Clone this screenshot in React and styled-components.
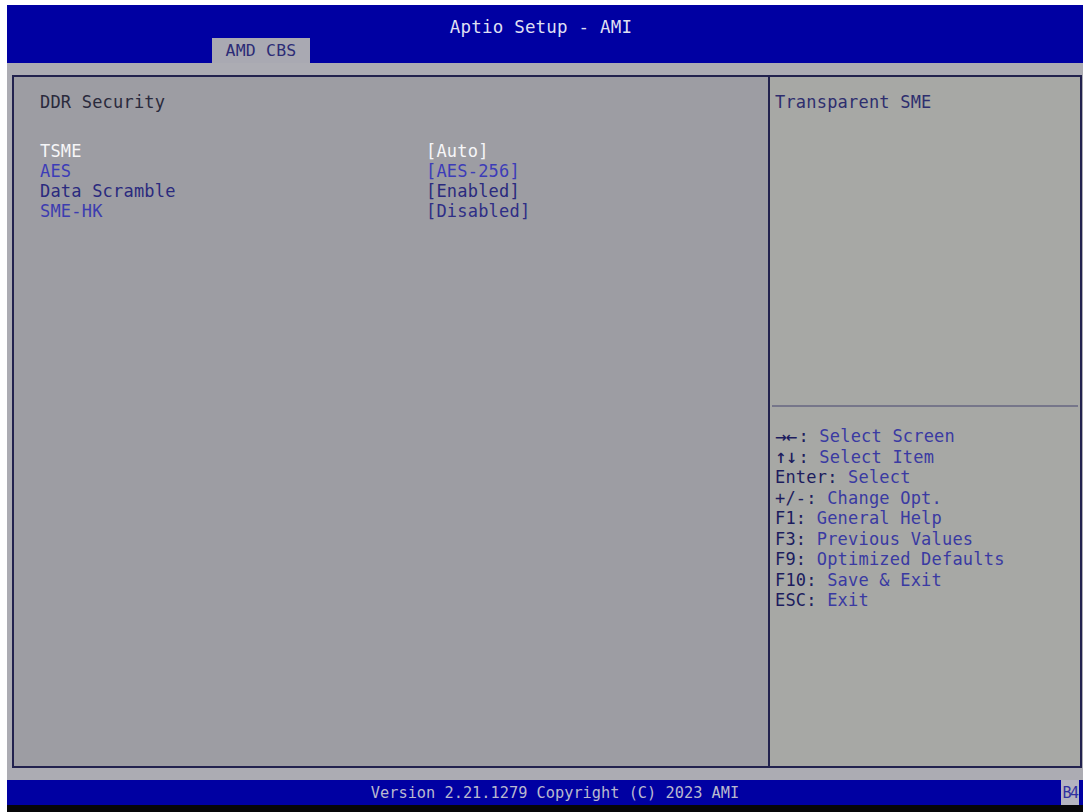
import styled, { createGlobalStyle } from "styled-components";

const GlobalStyle = createGlobalStyle`
  html, body {
    margin: 0;
    padding: 0;
    background: #ffffff;
  }
  body {
    font-family: "DejaVu Sans Mono", "Liberation Mono", monospace;
  }
`;

const Screen = styled.div`
  width: 1087px;
  height: 812px;
  overflow: hidden;
  background: #ffffff;
`;

const Frame = styled.div`
  margin: 5px 4px 0 7px;
  height: 807px;
  display: flex;
  flex-direction: column;
  font-size: 17px;
  letter-spacing: 0.2px;
`;

const Header = styled.header`
  height: 58px;
  background: #0000a2;
  display: flex;
  flex-direction: column;
  justify-content: space-between;
`;

const Title = styled.div`
  padding-top: 12px;
  padding-right: 8px;
  text-align: center;
  line-height: 20px;
  color: #dedff2;
  font-size: 17.5px;
`;

const TabRow = styled.div`
  display: flex;
  padding-left: 205px;
`;

const Tab = styled.div`
  width: 98px;
  height: 25px;
  background: #a9a9b2;
  color: #2c2c76;
  display: flex;
  align-items: center;
  justify-content: center;
  font-size: 16.5px;
`;

const Body = styled.main`
  flex: 1;
  background: #acacb3;
  padding: 12px 1px 12px 5px;
  display: flex;
`;

const Panel = styled.section`
  flex: 1;
  border: 2px solid #22224e;
  display: grid;
  grid-template-columns: 1fr 312px;
  background: #9d9da3;
`;

const Main = styled.div`
  padding: 15px 0 0 26px;
`;

const Line = styled.div`
  line-height: 20.5px;
  height: 20.5px;
  white-space: pre;
  color: ${(p) => p.$color || "#2a2a3c"};
`;

const Items = styled.div`
  margin-top: 28px;
`;

const Item = styled.div`
  display: grid;
  grid-template-columns: 386px 1fr;
  line-height: 20px;
  height: 20px;
  white-space: pre;
`;

const Label = styled.span`
  color: ${(p) => p.$color};
`;

const Side = styled.aside`
  border-left: 2px solid #22224e;
  background: #a7a8a5;
  display: flex;
  flex-direction: column;
`;

const Help = styled.div`
  height: 328px;
  padding: 15px 0 0 5px;
  box-sizing: border-box;
`;

const Rule = styled.div`
  height: 2px;
  margin: 0 2px 0 2px;
  background: #76768a;
`;

const Keys = styled.div`
  padding: 19px 0 0 5px;
`;

const Key = styled.span`
  color: #1c1c5e;
`;

const Arrows = styled.span`
  color: #1c1c5e;
  font-family: "DejaVu Sans", sans-serif;
  font-weight: bold;
  font-size: 14px;
  letter-spacing: -1px;
  margin-right: 2px;
`;

const Desc = styled.span`
  color: #3a3aa2;
`;

const Footer = styled.footer`
  height: 25px;
  background: #0000a2;
  display: flex;
  align-items: center;
`;

const Version = styled.div`
  flex: 1;
  text-align: center;
  color: #b9b9cf;
  font-size: 15.3px;
  letter-spacing: 0;
  padding-left: 42px;
`;

const Badge = styled.div`
  width: 18px;
  height: 25px;
  margin-right: 4px;
  background: #b4b4c0;
  color: #3030a0;
  font-size: 15px;
  letter-spacing: -1.5px;
  display: flex;
  align-items: center;
  justify-content: center;
`;

const Bottom = styled.div`
  height: 7px;
  background: #060608;
`;

const items = [
  { label: "TSME", value: "[Auto]", color: "#f6f6f8", valueColor: "#f6f6f8" },
  { label: "AES", value: "[AES-256]", color: "#3c3cb8", valueColor: "#3c3cb8" },
  { label: "Data Scramble", value: "[Enabled]", color: "#2a2a7e", valueColor: "#2a2a7e" },
  { label: "SME-HK", value: "[Disabled]", color: "#3c3cb0", valueColor: "#2e2e86" },
];

const keys = [
  ["→←", ":", " Select Screen"],
  ["↑↓", ":", " Select Item"],
  ["", "Enter:", " Select"],
  ["", "+/-:", " Change Opt."],
  ["", "F1:", " General Help"],
  ["", "F3:", " Previous Values"],
  ["", "F9:", " Optimized Defaults"],
  ["", "F10:", " Save & Exit"],
  ["", "ESC:", " Exit"],
];

export default function App() {
  return (
    <Screen>
      <GlobalStyle />
      <Frame>
        <Header>
          <Title>Aptio Setup - AMI</Title>
          <TabRow>
            <Tab>AMD CBS</Tab>
          </TabRow>
        </Header>
        <Body>
          <Panel>
            <Main>
              <Line>DDR Security</Line>
              <Items>
                {items.map((it) => (
                  <Item key={it.label}>
                    <Label $color={it.color}>{it.label}</Label>
                    <Label $color={it.valueColor}>{it.value}</Label>
                  </Item>
                ))}
              </Items>
            </Main>
            <Side>
              <Help>
                <Line $color="#2e2e6e">Transparent SME</Line>
              </Help>
              <Rule />
              <Keys>
                {keys.map(([a, k, d]) => (
                  <Line key={a + k}>
                    {a && <Arrows>{a}</Arrows>}
                    <Key>{k}</Key>
                    <Desc>{d}</Desc>
                  </Line>
                ))}
              </Keys>
            </Side>
          </Panel>
        </Body>
        <Footer>
          <Version>Version 2.21.1279 Copyright (C) 2023 AMI</Version>
          <Badge>B4</Badge>
        </Footer>
        <Bottom />
      </Frame>
    </Screen>
  );
}
